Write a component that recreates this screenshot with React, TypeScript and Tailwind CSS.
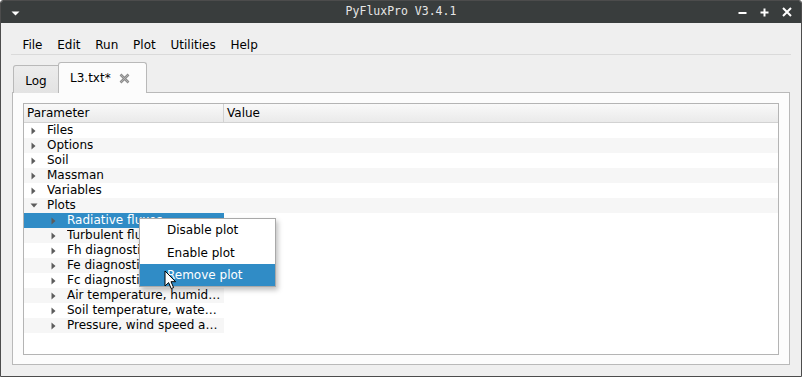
import React from "react";

type Row = { label: string; level: 0 | 1; open?: boolean; selected?: boolean };

const rows: Row[] = [
  { label: "Files", level: 0 },
  { label: "Options", level: 0 },
  { label: "Soil", level: 0 },
  { label: "Massman", level: 0 },
  { label: "Variables", level: 0 },
  { label: "Plots", level: 0, open: true },
  { label: "Radiative fluxes", level: 1, selected: true },
  { label: "Turbulent fluxes", level: 1 },
  { label: "Fh diagnostics", level: 1 },
  { label: "Fe diagnostics", level: 1 },
  { label: "Fc diagnostics", level: 1 },
  { label: "Air temperature, humid…", level: 1 },
  { label: "Soil temperature, wate…", level: 1 },
  { label: "Pressure, wind speed a…", level: 1 },
];

const menus = ["File", "Edit", "Run", "Plot", "Utilities", "Help"];

function Arrow({ open }: { open?: boolean }) {
  if (open) {
    return (
      <svg width="8" height="5" viewBox="0 0 8 5" className="shrink-0">
        <path d="M0.5 0.5 L7.5 0.5 L4 4.5 Z" fill="#5c5c5c" />
      </svg>
    );
  }
  return (
    <svg width="5" height="8" viewBox="0 0 5 8" className="shrink-0">
      <path d="M0.5 0.5 L4.5 4 L0.5 7.5 Z" fill="#5c5c5c" />
    </svg>
  );
}

function TreeRow({ row, index }: { row: Row; index: number }) {
  const alt = index % 2 === 1;
  const col0Bg = row.selected ? "bg-[#308cc6] text-white" : alt ? "bg-[#f6f6f6]" : "";
  const restBg = row.level === 0 && alt ? "bg-[#f6f6f6]" : "";
  return (
    <div className="flex h-[15px] leading-[15px]">
      <div className={`flex w-[200px] shrink-0 items-center overflow-hidden whitespace-nowrap ${col0Bg}`}>
        <div className={`flex w-[23px] shrink-0 items-center justify-center ${row.level === 1 ? "ml-[20px]" : ""}`}>
          <div className="ml-[-4px] flex w-[8px] justify-center">
            <Arrow open={row.open} />
          </div>
        </div>
        <span className="overflow-hidden">{row.label}</span>
      </div>
      <div className={`flex-1 ${restBg}`} />
    </div>
  );
}

export default function App() {
  return (
    <div
      className="relative flex h-[377px] w-[802px] flex-col overflow-hidden rounded-t-[3px] border border-[#4c4c4c] bg-[#efefef] text-[12px] text-black"
      style={{ fontFamily: '"DejaVu Sans", sans-serif' }}
    >
      {/* Title bar */}
      <div className="relative flex h-[22px] shrink-0 items-center bg-[#393d3d] px-[10px]">
        <svg width="9" height="5" viewBox="0 0 9 5" className="mt-[2px]">
          <path d="M0.5 0.5 L8.5 0.5 L4.5 4.5 Z" fill="#ffffff" />
        </svg>
        <div
          className="absolute inset-x-0 top-0 flex h-[22px] items-center justify-center text-[11.5px] text-[#e6e6e6]"
          style={{ fontFamily: '"DejaVu Sans Mono", monospace' }}
        >
          PyFluxPro V3.4.1
        </div>
        <div className="ml-auto mr-[-1px] flex items-center gap-[13px]">
          <svg width="9" height="9" viewBox="0 0 9 9">
            <path d="M0.5 5 H8.5" stroke="#fff" strokeWidth="2" />
          </svg>
          <svg width="9" height="9" viewBox="0 0 9 9">
            <path d="M0.5 4.5 H8.5 M4.5 0.5 V8.5" stroke="#fff" strokeWidth="2" />
          </svg>
          <svg width="10" height="10" viewBox="0 0 10 10">
            <path d="M1 1 L9 9 M9 1 L1 9" stroke="#fff" strokeWidth="2" />
          </svg>
        </div>
      </div>

      {/* Menu bar */}
      <div className="flex h-[31px] shrink-0 items-start pl-[14px] pt-[15px] leading-[15px]">
        {menus.map((m) => (
          <span key={m} className="px-[7.4px]">
            {m}
          </span>
        ))}
      </div>
      <div className="mx-[10px] h-px shrink-0 bg-[#dadada]" />

      {/* Tabs */}
      <div className="relative z-10 flex h-[37px] shrink-0 items-end pl-[12px] pt-[6px]">
        <div className="mb-[-1px] flex h-[28px] w-[46px] items-center justify-center rounded-tl-[3px] border border-b-0 border-[#b9b9b9] bg-gradient-to-b from-[#ececec] to-[#e3e3e3] pt-[2px]">
          Log
        </div>
        <div className="mb-[-1px] ml-[-1px] flex h-[31px] w-[89px] items-center rounded-t-[3px] border border-b-0 border-[#b9b9b9] bg-[#fcfcfc] pl-[11px]">
          <span>L3.txt*</span>
          <svg width="11" height="11" viewBox="0 0 11 11" className="ml-[8px]">
            <path d="M1.5 1.5 L9.5 9.5 M9.5 1.5 L1.5 9.5" stroke="#8c8c8c" strokeWidth="2.6" />
            <path d="M1.5 1.5 L9.5 9.5 M9.5 1.5 L1.5 9.5" stroke="#b8b8b8" strokeWidth="0.8" />
          </svg>
        </div>
      </div>

      {/* Tab pane */}
      <div className="ml-[11px] flex h-[273px] w-[778px] shrink-0 flex-col border border-[#b9b9b9] bg-[#fcfcfc] px-[10px] pb-[9px] pt-[10px]">
        <div className="flex h-full flex-col border border-[#b4b4b4] bg-white">
          <div className="flex h-[19px] shrink-0 border-b border-[#d2d2d2] bg-gradient-to-b from-[#f9f9f9] to-[#eaeaea] leading-[18px]">
            <div className="w-[200px] shrink-0 border-r border-[#d2d2d2] pl-[3px]">Parameter</div>
            <div className="flex-1 pl-[3px]">Value</div>
          </div>
          <div className="flex flex-col">
            {rows.map((r, i) => (
              <TreeRow key={r.label} row={r} index={i} />
            ))}
          </div>
        </div>
      </div>

      {/* Context menu */}
      <div className="absolute left-[138px] top-[217px] flex w-[137px] flex-col border border-[#a9a9a9] bg-white shadow-[2px_3px_5px_rgba(0,0,0,0.25)]">
        <div className="flex h-[22px] items-center pl-[27px]">Disable plot</div>
        <div className="flex h-[23px] items-center pl-[27px]">Enable plot</div>
        <div className="flex h-[22px] items-center bg-[#308cc6] pl-[27px] text-white">Remove plot</div>
      </div>

      {/* Mouse cursor */}
      <svg width="13" height="21" viewBox="0 0 13 21" className="absolute left-[163px] top-[269px]">
        <path
          d="M1 1 L1 16 L4.6 12.6 L7.2 18.6 L9.6 17.6 L7 11.7 L11.6 11.7 Z"
          fill="#ffffff"
          stroke="#000000"
          strokeWidth="1"
          strokeLinejoin="round"
        />
      </svg>
    </div>
  );
}
